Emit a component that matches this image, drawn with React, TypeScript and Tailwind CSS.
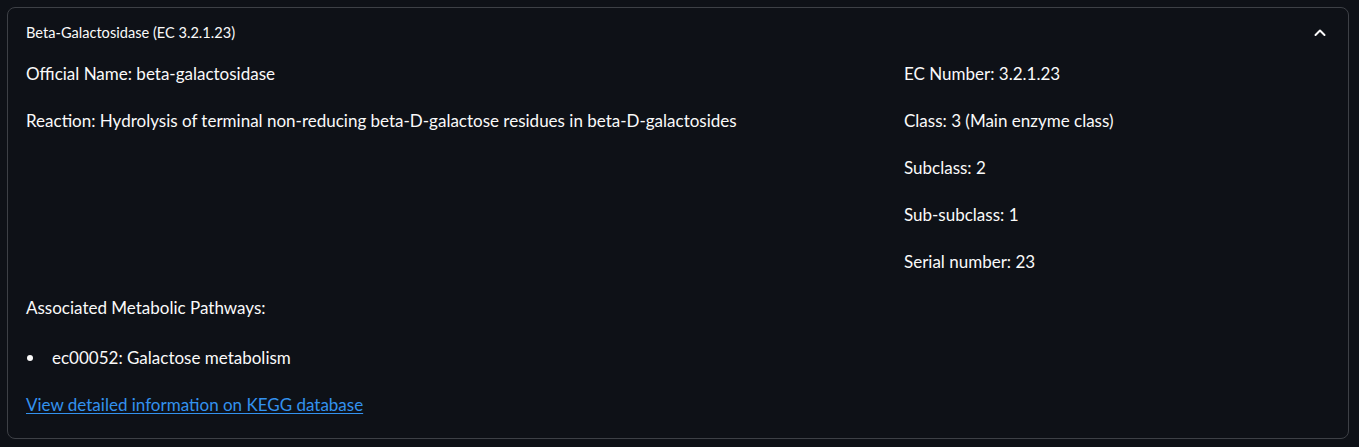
import React from "react";

const font = { fontFamily: '"Source Sans Pro", Lato, "Noto Sans", sans-serif' };

function ChevronUp() {
  return (
    <svg width="16" height="16" viewBox="0 0 16 16" fill="none" stroke="#fafafa" strokeWidth={2} strokeLinecap="round" strokeLinejoin="round">
      <path d="M3.5 10 L8 5.5 L12.5 10" />
    </svg>
  );
}

const rightFacts = [
  "EC Number: 3.2.1.23",
  "Class: 3 (Main enzyme class)",
  "Subclass: 2",
  "Sub-subclass: 1",
  "Serial number: 23",
];

export default function App() {
  return (
    <div className="min-h-[447px] bg-[#0e1117] pl-[7px] pr-[10px] pt-[7px] text-[#fafafa]" style={font}>
      <div className="h-[432px] rounded-lg border border-[#3d4046]">
        {/* Expander header */}
        <div className="flex h-[50px] items-center justify-between pl-[18px] pr-[20px]">
          <span className="text-[14.6px] leading-[22px]">Beta-Galactosidase (EC 3.2.1.23)</span>
          <ChevronUp />
        </div>

        {/* Expander body */}
        <div className="flex flex-col pl-[18px] pr-[18px] pt-[3px] text-[17px] leading-[26px]">
          <div className="flex">
            <div className="flex w-[878px] flex-col gap-[21px]">
              <p>Official Name: beta-galactosidase</p>
              <p>Reaction: Hydrolysis of terminal non-reducing beta-D-galactose residues in beta-D-galactosides</p>
            </div>
            <div className="flex flex-1 flex-col gap-[21px]">
              {rightFacts.map((f) => (
                <p key={f}>{f}</p>
              ))}
            </div>
          </div>

          <p className="mt-[20px]">Associated Metabolic Pathways:</p>

          <ul className="mt-[24px]">
            <li className="flex items-center">
              <span className="ml-[1px] mr-[19px] h-[6px] w-[6px] rounded-full bg-[#fafafa]" />
              <span>ec00052: Galactose metabolism</span>
            </li>
          </ul>

          <a href="#" className="mt-[21px] w-fit text-[#3391ee] underline underline-offset-2">
            View detailed information on KEGG database
          </a>
        </div>
      </div>
    </div>
  );
}
